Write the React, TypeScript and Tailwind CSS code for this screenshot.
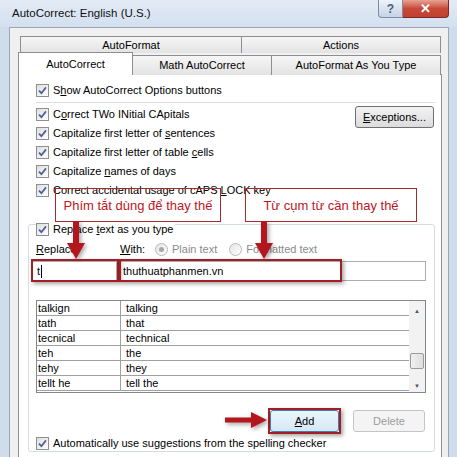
import React from "react";

const rows = [
  ["talkign", "talking"],
  ["tath", "that"],
  ["tecnical", "technical"],
  ["teh", "the"],
  ["tehy", "they"],
  ["tellt he", "tell the"],
];

function Check() {
  return (
    <span className="inline-flex h-[13px] w-[13px] shrink-0 items-center justify-center border border-[#8e8f8f] bg-gradient-to-br from-[#dedede] to-white">
      <svg viewBox="0 0 9 9" className="h-[9px] w-[9px]">
        <path d="M1 4.6 L3.4 7.2 L8 1.4" stroke="#4a5f97" strokeWidth="1.7" fill="none" />
      </svg>
    </span>
  );
}

function Radio({ on }: { on?: boolean }) {
  return (
    <span className="inline-flex h-[13px] w-[13px] items-center justify-center rounded-full border border-[#b8b8b8] bg-gradient-to-br from-[#e4e4e4] to-white">
      {on && <span className="h-[5px] w-[5px] rounded-full bg-[#a8a8a8]" />}
    </span>
  );
}

function CheckRow({ children, className = "" }: { children: React.ReactNode; className?: string }) {
  return (
    <div className={`flex h-[19px] items-center gap-[4px] ${className}`}>
      <Check />
      <span>{children}</span>
    </div>
  );
}

function DownArrow() {
  return (
    <svg width="24" height="40" viewBox="0 0 24 40" className="drop-shadow-[2px_2px_2px_rgba(0,0,0,0.35)]">
      <rect x="9" y="0" width="6" height="24" fill="#b3161c" />
      <path d="M3 22 L21 22 L12 38 Z" fill="#b3161c" />
    </svg>
  );
}

export default function App() {
  return (
    <div className="relative h-[457px] w-[457px] overflow-hidden bg-[#cfdcec] font-['Liberation_Sans',Arial,sans-serif] text-[11px] leading-none text-black">
      {/* title bar */}
      <div className="flex h-[27px] items-start bg-gradient-to-b from-[#e3ebf5] to-[#d3e0ef]">
        <span className="ml-[12px] mt-[8px] text-[11.5px] text-[#111]">AutoCorrect: English (U.S.)</span>
        <div className="ml-auto mr-[8px] flex">
          <div className="flex h-[18px] w-[25px] items-center justify-center rounded-bl-[4px] border border-t-0 border-[#7d8da3] bg-gradient-to-b from-[#eef3f9] to-[#c4d3e6] text-[12px] font-bold text-[#4a5c78]">
            ?
          </div>
          <div className="flex h-[18px] w-[46px] items-center justify-center rounded-br-[4px] border border-l-0 border-t-0 border-[#7a2a22] bg-gradient-to-b from-[#e6a293] via-[#c7493a] to-[#c2402f] text-[13px] font-bold text-white">
            ✕
          </div>
        </div>
      </div>

      {/* client */}
      <div className="ml-[9px] h-[440px] w-[440px] border border-[#9aa6b5] bg-[#f0f0f0] pl-[8px] pt-[8px]">
        {/* tab row 1 */}
        <div className="ml-[2px] flex h-[17px] w-[421px]">
          <div className="flex w-[222px] items-center justify-center border border-b-0 border-[#8c8e94] bg-gradient-to-b from-[#f6f6f6] to-[#e3e3e3]">AutoFormat</div>
          <div className="flex flex-1 items-center justify-center border border-b-0 border-l-0 border-[#8c8e94] bg-gradient-to-b from-[#f6f6f6] to-[#e3e3e3]">Actions</div>
        </div>
        {/* tab row 2 */}
        <div className="-mt-[1px] flex h-[23px] w-[423px] items-end">
          <div className="relative z-10 flex h-[23px] w-[115px] items-center justify-center border border-b-0 border-[#8c8e94] bg-white">AutoCorrect</div>
          <div className="flex h-[20px] w-[139px] items-center justify-center border border-b-0 border-l-0 border-[#8c8e94] bg-gradient-to-b from-[#f6f6f6] to-[#e3e3e3]">Math AutoCorrect</div>
          <div className="flex h-[20px] flex-1 items-center justify-center border border-b-0 border-l-0 border-[#8c8e94] bg-gradient-to-b from-[#f6f6f6] to-[#e3e3e3]">AutoFormat As You Type</div>
        </div>
        {/* panel */}
        <div className="-mt-[1px] h-[400px] w-[424px] border border-[#8c8e94] bg-white pl-[17px] pt-[6px]">
          <CheckRow>
            S<u>h</u>ow AutoCorrect Options buttons
          </CheckRow>
          <div className="my-[2px] h-px w-[399px] bg-[#dcdcdc]" />
          <div className="flex">
            <div>
              <CheckRow>
                C<u>o</u>rrect TWo INitial CApitals
              </CheckRow>
              <CheckRow>
                Capitalize first letter of <u>s</u>entences
              </CheckRow>
              <CheckRow>
                Capitalize first letter of table <u>c</u>ells
              </CheckRow>
              <CheckRow>
                Capitalize <u>n</u>ames of days
              </CheckRow>
              <CheckRow>
                Correct accidental usage of cAPS <u>L</u>OCK key
              </CheckRow>
            </div>
            <div className="ml-auto mr-[7px] mt-[1px] flex h-[22px] w-[79px] items-center justify-center rounded-[3px] border border-[#707070] bg-gradient-to-b from-[#f3f3f3] to-[#dcdcdc]">
              <span>
                <u>E</u>xceptions...
              </span>
            </div>
          </div>

          {/* group */}
          <div className="-ml-[8px] mt-[24px] h-[228px] w-[407px] rounded-[3px] border border-[#d5dde3] px-[7px]">
            <div className="-mt-[10px] inline-flex bg-white pr-[2px]">
              <CheckRow>
                Replace <u>t</u>ext as you type
              </CheckRow>
            </div>
            <div className="mt-[1px] flex h-[18px] items-center">
              <span className="w-[84px]">
                <u>R</u>eplace:
              </span>
              <span className="w-[35px]">
                <u>W</u>ith:
              </span>
              <span className="flex items-center gap-[4px] text-[#8a8a8a]">
                <Radio on /> Plain text
              </span>
              <span className="ml-[12px] flex items-center gap-[4px] text-[#8a8a8a]">
                <Radio /> Formatted text
              </span>
            </div>
            <div className="-ml-[4px] mt-[3px] flex h-[20px]">
              <div className="flex w-[85px] items-center border border-[#abadb3] pl-[4px]">
                t<span className="ml-px h-[13px] w-px bg-black" />
              </div>
              <div className="ml-[3px] flex w-[306px] items-center border border-[#abadb3] pl-[2px]">thuthuatphanmen.vn</div>
            </div>

            {/* list */}
            <div className="mt-[19px] flex h-[93px] w-[390px] border border-[#828790]">
              <div className="flex-1">
                {rows.map(([a, b]) => (
                  <div key={a} className="flex h-[15px] items-center border-b border-[#a0a0a0]">
                    <span className="w-[83px] pl-[1px]">{a}</span>
                    <span className="h-full border-l border-[#a0a0a0]" />
                    <span className="pl-[5px]">{b}</span>
                  </div>
                ))}
              </div>
              <div className="flex w-[16px] flex-col items-center bg-[#f2f2f2]">
                <span className="mt-[7px] text-[6px] text-[#555]">▲</span>
                <div className="mt-[39px] h-[16px] w-[14px] rounded-[2px] border border-[#9a9a9a] bg-gradient-to-r from-[#f0f0f0] to-[#dedede]" />
                <span className="mt-[14px] text-[6px] text-[#555]">▼</span>
              </div>
            </div>

            {/* buttons */}
            <div className="mt-[17px] flex h-[22px] justify-end pr-[2px]">
              <div className="flex w-[69px] items-center justify-center rounded-[3px] border border-[#3c7fb1] bg-gradient-to-b from-[#eaf6fd] to-[#d7e7f2]">
                <u>A</u>dd
              </div>
              <div className="ml-[14px] flex w-[72px] items-center justify-center rounded-[3px] border border-[#c4c4c4] bg-[#f4f4f4] text-[#9c9c9c]">Delete</div>
            </div>
            <CheckRow className="mt-[2px]">
              Automatically use su<u>g</u>gestions from the spelling checker
            </CheckRow>
          </div>
        </div>
      </div>

      {/* annotations */}
      <div className="absolute left-[55px] top-[188px] flex h-[34px] w-[166px] items-center justify-center border border-[#a52a2a] text-[13px] text-[#c0161c]">
        Phím tắt dùng để thay thế
      </div>
      <div className="absolute left-[245px] top-[188px] flex h-[34px] w-[172px] items-center justify-center border border-[#a52a2a] text-[13px] text-[#c0161c]">
        Từ cụm từ cần thay thế
      </div>
      <div className="absolute left-[64px] top-[221px]">
        <DownArrow />
      </div>
      <div className="absolute left-[252px] top-[221px]">
        <DownArrow />
      </div>
      <div className="absolute left-[31px] top-[259px] h-[23px] w-[88px] border-2 border-[#a11e22] shadow-[2px_2px_4px_rgba(0,0,0,0.35)]" />
      <div className="absolute left-[119px] top-[259px] h-[23px] w-[223px] border-2 border-[#a11e22] shadow-[2px_2px_4px_rgba(0,0,0,0.35)]" />
      <div className="absolute left-[268px] top-[408px] h-[26px] w-[73px] border-2 border-[#a11e22] shadow-[2px_2px_4px_rgba(0,0,0,0.35)]" />
      <svg width="44" height="18" viewBox="0 0 44 18" className="absolute left-[225px] top-[411px] drop-shadow-[2px_2px_2px_rgba(0,0,0,0.35)]">
        <rect x="0" y="6.5" width="28" height="5" fill="#b3161c" />
        <path d="M26 1 L42 9 L26 17 Z" fill="#b3161c" />
      </svg>
    </div>
  );
}
